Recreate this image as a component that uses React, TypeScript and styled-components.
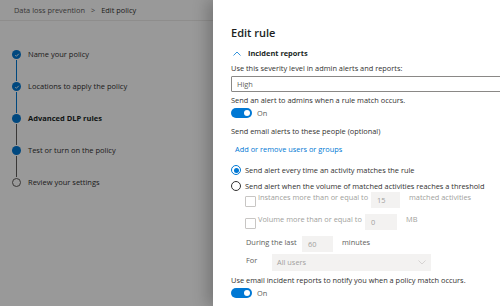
import React from 'react';
import styled, { createGlobalStyle } from 'styled-components';

const GlobalStyle = createGlobalStyle`
  html, body, #root {
    margin: 0;
    padding: 0;
    width: 500px;
    height: 306px;
    overflow: hidden;
  }
  body {
    font-family: "Open Sans", "Noto Sans", sans-serif;
    color: #323130;
  }
`;

const Page = styled.div`
  position: relative;
  width: 500px;
  height: 306px;
  background: #ffffff;
  overflow: hidden;
`;

const Breadcrumb = styled.div`
  display: flex;
  align-items: center;
  gap: 6px;
  height: 20px;
  padding: 0 14px;
  border-bottom: 1px solid #edebe9;
  font-size: 7.4px;
  color: #605e5c;
`;

const Crumb = styled.span<{ $current?: boolean }>`
  color: ${p => (p.$current ? '#323130' : '#605e5c')};
`;

const Steps = styled.ol`
  list-style: none;
  margin: 0;
  padding: 29px 0 0 12px;
  display: flex;
  flex-direction: column;
`;

const StepRow = styled.li`
  display: flex;
  gap: 7px;
  height: 32px;
`;

const MarkerCol = styled.div`
  display: flex;
  flex-direction: column;
  align-items: center;
  width: 9px;
`;

const Dot = styled.span<{ $state: 'done' | 'active' | 'todo' }>`
  display: flex;
  align-items: center;
  justify-content: center;
  flex: none;
  box-sizing: border-box;
  width: 9px;
  height: 9px;
  border-radius: 50%;
  background: ${p => (p.$state === 'todo' ? '#ffffff' : '#0078d4')};
  border: ${p => (p.$state === 'todo' ? '1px solid #605e5c' : 'none')};
`;

const Connector = styled.span<{ $done?: boolean }>`
  flex: 1;
  width: 1.5px;
  margin: 1px 0;
  background: ${p => (p.$done ? '#0078d4' : '#605e5c')};
`;

const StepLabel = styled.span<{ $bold?: boolean }>`
  font-size: 7.5px;
  line-height: 9px;
  font-weight: ${p => (p.$bold ? 700 : 400)};
  color: ${p => (p.$bold ? '#201f1e' : '#323130')};
`;

const Overlay = styled.div`
  position: absolute;
  inset: 0;
  background: rgba(0, 0, 0, 0.4);
`;

const Panel = styled.aside`
  position: absolute;
  top: 0;
  bottom: 0;
  left: 213px;
  width: 340px;
  box-sizing: border-box;
  padding: 25px 0 0 18px;
  background: #ffffff;
  box-shadow: -6px 0 14px rgba(0, 0, 0, 0.22);
  display: flex;
  flex-direction: column;
  white-space: nowrap;
`;

const Title = styled.h2`
  margin: 0;
  font-size: 11px;
  line-height: 16px;
  font-weight: 600;
  color: #201f1e;
`;

const SectionHeader = styled.div`
  display: flex;
  align-items: center;
  gap: 7px;
  margin: 6px 0 0 2px;
  height: 12px;
  font-size: 7.4px;
  font-weight: 700;
  color: #201f1e;
`;

const Label = styled.div<{ $top?: number }>`
  margin-top: ${p => p.$top ?? 0}px;
  font-size: 7.4px;
  line-height: 11px;
  color: #323130;
`;

const TextBox = styled.div`
  margin-top: 2px;
  height: 16px;
  box-sizing: border-box;
  border: 1px solid #8a8886;
  border-radius: 1px;
  padding-left: 5px;
  display: flex;
  align-items: center;
  font-size: 7.4px;
  color: #605e5c;
`;

const ToggleRow = styled.div`
  display: flex;
  align-items: center;
  gap: 5px;
  height: 12px;
  margin-top: 1px;
  font-size: 7.4px;
  color: #605e5c;
`;

const Toggle = styled.span`
  position: relative;
  width: 21px;
  height: 10px;
  border-radius: 5px;
  background: #0078d4;
  &::after {
    content: '';
    position: absolute;
    right: 2px;
    top: 2px;
    width: 6px;
    height: 6px;
    border-radius: 50%;
    background: #ffffff;
  }
`;

const Link = styled.a`
  margin: 7px 0 0 4px;
  font-size: 7.4px;
  line-height: 11px;
  color: #0078d4;
  text-decoration: none;
`;

const RadioRow = styled.label<{ $top: number }>`
  display: flex;
  align-items: center;
  gap: 4px;
  margin-top: ${p => p.$top}px;
  height: 12px;
  font-size: 7.4px;
  color: #323130;
`;

const Radio = styled.span<{ $checked?: boolean }>`
  box-sizing: border-box;
  width: 10px;
  height: 10px;
  border-radius: 50%;
  border: 1px solid ${p => (p.$checked ? '#0078d4' : '#323130')};
  display: flex;
  align-items: center;
  justify-content: center;
  &::after {
    content: '';
    width: 5px;
    height: 5px;
    border-radius: 50%;
    background: ${p => (p.$checked ? '#0078d4' : 'transparent')};
  }
`;

const SubRow = styled.div<{ $top: number; $indent?: number }>`
  display: flex;
  align-items: center;
  margin: ${p => p.$top}px 0 0 ${p => p.$indent ?? 14}px;
  height: 16px;
  font-size: 7.4px;
  color: #a19f9d;
`;

const CheckBox = styled.span`
  box-sizing: border-box;
  width: 11px;
  height: 11px;
  margin: 4px 2px 0 0;
  border: 1px solid #c8c6c4;
  border-radius: 1px;
  align-self: flex-start;
`;

const SubLabel = styled.span<{ $width?: number }>`
  width: ${p => (p.$width ? `${p.$width}px` : 'auto')};
  align-self: flex-start;
  line-height: 10px;
  color: #a19f9d;
`;

const DarkLabel = styled.span<{ $width?: number }>`
  width: ${p => (p.$width ? `${p.$width}px` : 'auto')};
  color: #605e5c;
  align-self: flex-start;
  line-height: 12px;
`;

const NumBox = styled.span<{ $width: number }>`
  display: flex;
  align-items: center;
  width: ${p => p.$width}px;
  height: 16px;
  box-sizing: border-box;
  padding-left: 6px;
  background: #f3f2f1;
  color: #a19f9d;
  margin-right: 9px;
`;

const Select = styled.span`
  display: flex;
  align-items: center;
  justify-content: space-between;
  width: 159px;
  height: 17px;
  box-sizing: border-box;
  padding: 0 5px;
  background: #f3f2f1;
  color: #a19f9d;
`;

const steps: { label: string; state: 'done' | 'active' | 'todo'; line?: boolean; bold?: boolean }[] = [
  { label: 'Name your policy', state: 'done', line: true },
  { label: 'Locations to apply the policy', state: 'done', line: true },
  { label: 'Advanced DLP rules', state: 'active', line: false, bold: true },
  { label: 'Test or turn on the policy', state: 'active', line: false },
  { label: 'Review your settings', state: 'todo' },
];

const Check = () => (
  <svg width="6" height="6" viewBox="0 0 12 12">
    <path d="M2.5 6.3l2.3 2.3 4.7-5" fill="none" stroke="#fff" strokeWidth="1.8" />
  </svg>
);

const ChevronUp = () => (
  <svg width="8" height="5" viewBox="0 0 16 10">
    <path d="M1 9l7-7 7 7" fill="none" stroke="#0078d4" strokeWidth="1.6" />
  </svg>
);

const ChevronDown = () => (
  <svg width="8" height="5" viewBox="0 0 16 10">
    <path d="M1 1l7 7 7-7" fill="none" stroke="#c8c6c4" strokeWidth="1.4" />
  </svg>
);

const App: React.FC = () => {
  return (
    <Page>
      <GlobalStyle />
      <Breadcrumb>
        <Crumb>Data loss prevention</Crumb>
        <Crumb>&gt;</Crumb>
        <Crumb $current>Edit policy</Crumb>
      </Breadcrumb>
      <Steps>
        {steps.map((s, i) => (
          <StepRow key={s.label}>
            <MarkerCol>
              <Dot $state={s.state}>{s.state === 'done' && <Check />}</Dot>
              {i < steps.length - 1 && <Connector $done={s.line} />}
            </MarkerCol>
            <StepLabel $bold={s.bold}>{s.label}</StepLabel>
          </StepRow>
        ))}
      </Steps>
      <Overlay />
      <Panel>
        <Title>Edit rule</Title>
        <SectionHeader>
          <ChevronUp />
          Incident reports
        </SectionHeader>
        <Label $top={4}>Use this severity level in admin alerts and reports:</Label>
        <TextBox>High</TextBox>
        <Label $top={3}>Send an alert to admins when a rule match occurs.</Label>
        <ToggleRow>
          <Toggle />
          On
        </ToggleRow>
        <Label $top={7}>Send email alerts to these people (optional)</Label>
        <Link>Add or remove users or groups</Link>
        <RadioRow $top={9}>
          <Radio $checked />
          Send alert every time an activity matches the rule
        </RadioRow>
        <RadioRow $top={4}>
          <Radio />
          Send alert when the volume of matched activities reaches a threshold
        </RadioRow>
        <SubRow $top={0}>
          <CheckBox />
          <SubLabel $width={113}>Instances more than or equal to</SubLabel>
          <NumBox $width={29}>15</NumBox>
          <SubLabel>matched activities</SubLabel>
        </SubRow>
        <SubRow $top={6}>
          <CheckBox />
          <SubLabel $width={107}>Volume more than or equal to</SubLabel>
          <NumBox $width={32}>0</NumBox>
          <SubLabel>MB</SubLabel>
        </SubRow>
        <SubRow $top={6} $indent={15}>
          <DarkLabel $width={56}>During the last</DarkLabel>
          <NumBox $width={31}>60</NumBox>
          <DarkLabel>minutes</DarkLabel>
        </SubRow>
        <SubRow $top={2} $indent={15}>
          <DarkLabel $width={26}>For</DarkLabel>
          <Select>
            All users
            <ChevronDown />
          </Select>
        </SubRow>
        <Label $top={5}>Use email incident reports to notify you when a policy match occurs.</Label>
        <ToggleRow>
          <Toggle />
          On
        </ToggleRow>
      </Panel>
    </Page>
  );
};

export default App;
